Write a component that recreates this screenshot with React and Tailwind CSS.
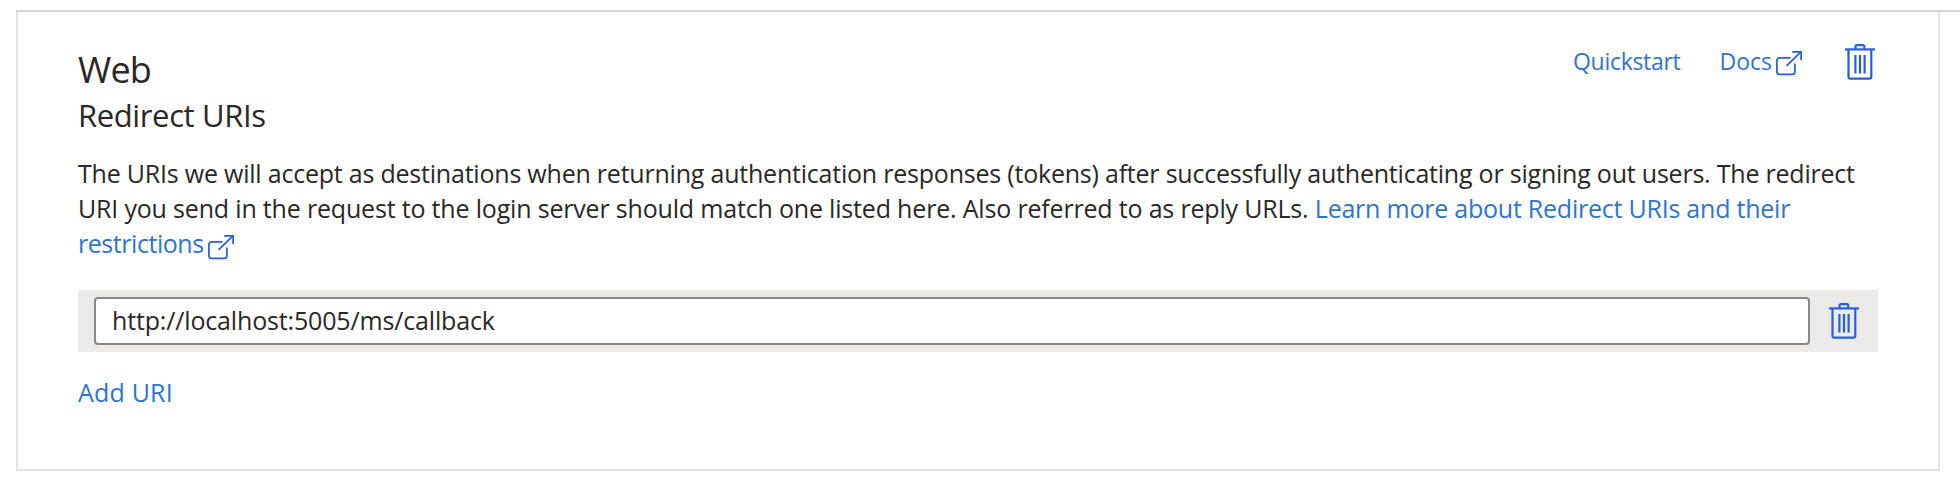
function TrashIcon() {
  return (
    <svg className="block h-9 w-[30px] shrink-0" viewBox="0 0 30 36" fill="none" stroke="#265edb" strokeWidth="2.2">
      <path d="M0 5.4H30" />
      <path d="M10.5 5V2.6a1.4 1.4 0 0 1 1.4-1.4h6a1.4 1.4 0 0 1 1.4 1.4V5" />
      <path d="M3.5 5.4V33a1.6 1.6 0 0 0 1.6 1.6h19.6a1.6 1.6 0 0 0 1.6-1.6V5.4" />
      <path d="M10.4 11v18.4M15 11v18.4M19.6 11v18.4" />
    </svg>
  );
}

function ExternalIcon({ className }) {
  return (
    <svg className={className} viewBox="0 0 27 26" fill="none" stroke="#265edb" strokeWidth="1.7">
      <path d="M14.3 7.9H3.6a2.7 2.7 0 0 0-2.7 2.7V21.7a2.7 2.7 0 0 0 2.7 2.7H16.2a2.7 2.7 0 0 0 2.7-2.7V13.4" />
      <path d="M10.5 15.9L25 1.8" />
      <path d="M16.3 1.8H25.1V10.3" />
    </svg>
  );
}

export default function App() {
  return (
    <main className="h-[484px] w-full bg-white pt-2.5 pl-4 font-['Open_Sans','Noto_Sans',sans-serif] text-[25px] text-[#292827]">
      <div className="border-t-2 border-[#d6d6d6]">
        <section className="h-[459px] w-[1924px] border-x-2 border-b-2 border-[#e4e4e4] px-[60px] pt-[30px]">
          <header className="flex items-start justify-between">
            <div className="pt-[5px]">
              <h1 className="text-[36px] leading-[46px] tracking-[-0.8px]">Web</h1>
              <h2 className="text-[31px] leading-[45px] tracking-[-0.38px]">Redirect URIs</h2>
            </div>
            <nav className="mr-[3px] flex h-10 items-center text-[23px] leading-[38px] text-[#2f74d0]">
              <a className="mr-[39px] -mt-0.5 tracking-[-0.3px]">Quickstart</a>
              <a className="mr-[42px] flex items-center gap-1">
                <span className="-mt-0.5">Docs</span>
                <ExternalIcon className="mt-px h-[26px] w-[27px]" />
              </a>
              <TrashIcon />
            </nav>
          </header>
          <p className="mt-[18px] leading-[35px] whitespace-nowrap">
            <span className="block tracking-[-0.215px]">
              The URIs we will accept as destinations when returning authentication responses (tokens) after successfully authenticating or signing out users. The redirect
            </span>
            <span className="block">
              <span className="tracking-[-0.18px]">
                URI you send in the request to the login server should match one listed here. Also referred to as reply URLs.{" "}
              </span>
              <a className="tracking-[-0.23px] text-[#2f74d0]">Learn more about Redirect URIs and their</a>
            </span>
            <a className="flex h-[35px] items-center gap-1 text-[#2f74d0]">
              <span className="tracking-[-0.45px]">restrictions</span>
              <ExternalIcon className="mt-[7px] h-[26px] w-[27px]" />
            </a>
          </p>
          <div className="mt-[29px] flex h-[62px] items-center bg-[#ebeae9] pr-[19px] pl-4">
            <input
              className="mr-[19px] h-12 min-w-0 flex-1 rounded-[4px] border-2 border-[#8a8886] bg-white px-4 pb-0.5 tracking-[-0.16px] outline-none"
              defaultValue="http://localhost:5005/ms/callback"
            />
            <TrashIcon />
          </div>
          <a className="mt-[22px] block leading-9 tracking-[0.2px] text-[#2f74d0]">Add URI</a>
        </section>
      </div>
    </main>
  );
}
